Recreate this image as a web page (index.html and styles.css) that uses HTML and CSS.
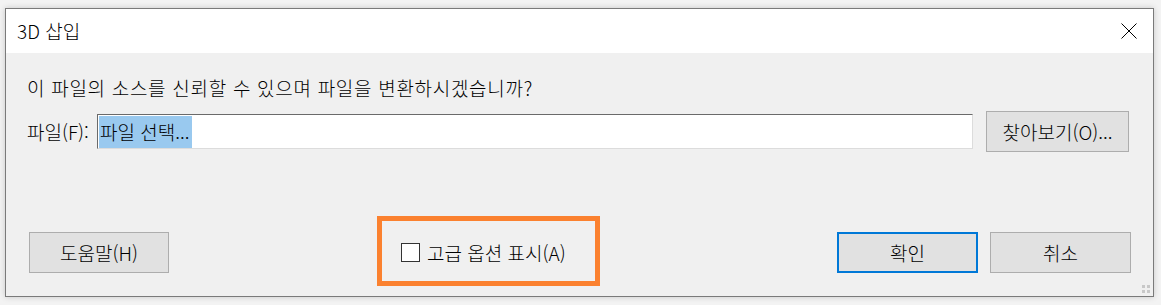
FILE: index.html
```html
<!DOCTYPE html>
<html lang="ko">
<head>
<meta charset="utf-8">
<title>3D 삽입</title>
<link rel="stylesheet" href="styles.css">
</head>
<body>
<div class="dialog">
  <div class="titlebar">
    <span class="title">3D 삽입</span>
    <svg class="close" width="16" height="16" viewBox="0 0 16 16" aria-label="닫기">
      <path d="M0.5 0.5 L15.5 15.5 M15.5 0.5 L0.5 15.5" stroke="#000" stroke-width="1" fill="none"/>
    </svg>
  </div>
  <div class="content">
    <p class="question">이 파일의 소스를 신뢰할 수 있으며 파일을 변환하시겠습니까?</p>
    <div class="file-row">
      <span class="label">파일(F):</span>
      <div class="input"><span class="selected">파일 선택...</span></div>
      <button class="btn browse">찾아보기(O)...</button>
    </div>
    <div class="bottom-row">
      <button class="btn help">도움말(H)</button>
      <div class="check-group">
        <span class="checkbox"></span>
        <span class="check-label">고급 옵션 표시(A)</span>
        <span class="highlight"></span>
      </div>
      <div class="spacer"></div>
      <button class="btn ok">확인</button>
      <button class="btn cancel">취소</button>
    </div>
  </div>
  <svg class="grip" width="8" height="8" viewBox="0 0 8 8">
    <rect x="0" y="0" width="3" height="3" fill="#c8c8c8"/>
    <rect x="5" y="0" width="3" height="3" fill="#c8c8c8"/>
    <rect x="0" y="5" width="3" height="3" fill="#c8c8c8"/>
    <rect x="5" y="5" width="3" height="3" fill="#c8c8c8"/>
  </svg>
</div>
</body>
</html>
```
FILE: styles.css
```css
* { box-sizing: border-box; }
html, body {
  margin: 0;
  padding: 0;
  background: #f3f3f3;
  width: 1161px;
  height: 305px;
  overflow: hidden;
}
body {
  font-family: "Noto Sans CJK KR", "Noto Sans", sans-serif;
  font-size: 19px;
  font-weight: 300;
  color: #000;
}
.dialog {
  position: relative;
  margin: 8px 0 0 5px;
  width: 1149px;
  height: 289px;
  border: 1px solid #7a7a7a;
  background: #f0f0f0;
  box-shadow: 0 0 6px rgba(0,0,0,0.18);
  display: flex;
  flex-direction: column;
}
.titlebar {
  height: 44px;
  background: #fff;
  display: flex;
  align-items: center;
  padding: 0 16px 0 11px;
  flex: none;
}
.title {
  flex: 1;
  line-height: 24px;
}
.close { display: block; }
.content {
  flex: 1;
  display: flex;
  flex-direction: column;
  padding: 23px 22px 23px 23px;
}
.question {
  margin: 0 0 0 -2px;
  line-height: 24px;
  letter-spacing: 0.7px;
}
.file-row {
  display: flex;
  align-items: center;
  margin-top: 11px;
  height: 41px;
}
.label {
  width: 70px;
  line-height: 24px;
  margin-left: -2px;
}
.input {
  width: 876px;
  height: 35px;
  background: #fff;
  border-top: 1px solid #6a6a6a;
  border-left: 1px solid #6a6a6a;
  border-right: 1px solid #dcdcdc;
  border-bottom: 1px solid #dcdcdc;
  padding: 1px 0 0 1px;
  display: flex;
  align-items: stretch;
}
.selected {
  background: #99c9ef;
  padding: 0 2px 0 1px;
  line-height: 31px;
}
.btn {
  font-family: inherit;
  font-size: 19px;
  font-weight: 300;
  color: #000;
  background: #e1e1e1;
  border: 1px solid #adadad;
  height: 41px;
  padding: 0;
  margin: 0;
  line-height: 24px;
}
.browse {
  width: 143px;
  margin-left: 13px;
}
.bottom-row {
  margin-top: auto;
  display: flex;
  align-items: center;
  height: 41px;
}
.help { width: 140px; margin-left: 0; }
.check-group {
  position: relative;
  margin-left: 232px;
  display: flex;
  align-items: center;
}
.checkbox {
  width: 19px;
  height: 19px;
  border: 1px solid #333;
  background: #fff;
  margin-right: 7px;
}
.check-label { line-height: 24px; }
.highlight {
  position: absolute;
  left: -24px;
  top: -25px;
  width: 223px;
  height: 70px;
  border: 5px solid #fb812f;
  pointer-events: none;
}
.spacer { flex: 1; }
.ok {
  width: 141px;
  border: 2px solid #0078d7;
}
.cancel {
  width: 141px;
  margin-left: 12px;
}
.grip {
  position: absolute;
  right: 3px;
  bottom: 3px;
}
```
